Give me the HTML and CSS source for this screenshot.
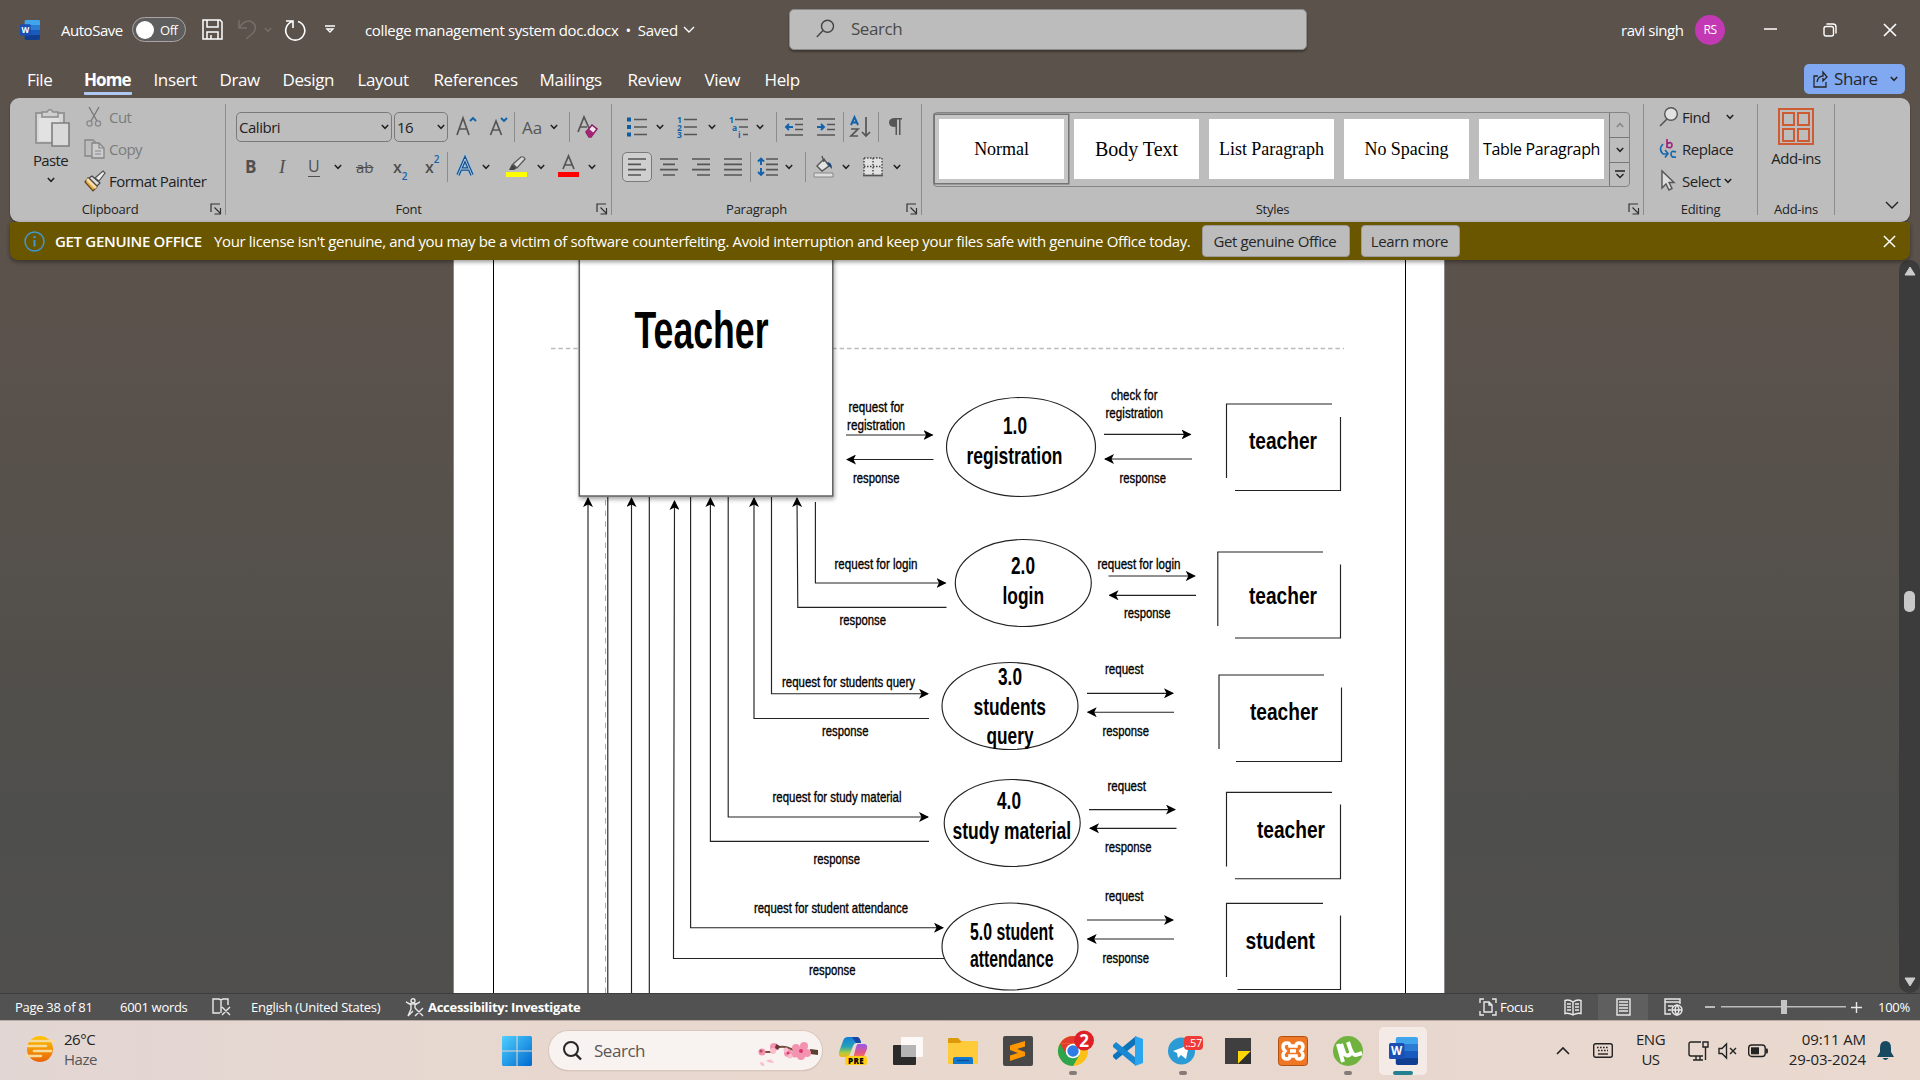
FILE: index.html
```html
<!DOCTYPE html>
<html lang="en">
<head>
<meta charset="utf-8">
<title>college management system doc.docx - Word</title>
<link rel="stylesheet" href="styles.css">
</head>
<body>
<svg class="defs" width="0" height="0">
  <defs>
    <symbol id="chev" viewBox="0 0 8 6"><path d="M.8 1 4 4.3 7.2 1" fill="none" stroke="currentColor" stroke-width="1.5"/></symbol>
    <symbol id="close" viewBox="0 0 14 14"><path d="M1 1l12 12M13 1 1 13" fill="none" stroke="currentColor" stroke-width="1.6"/></symbol>
    <symbol id="launch" viewBox="0 0 12 12"><path d="M1 9V1h9M4.500 4.500l5.500 5.500M10.500 5v6h-6" fill="none" stroke="#333" stroke-width="1.2"/></symbol>
    <symbol id="word" viewBox="0 0 30 28">
      <path d="M9 0h19q2 0 2 2v5H7V2q0-2 2-2z" fill="#41a5ee"/><path d="M7 7h23v7H7z" fill="#2b7cd3"/><path d="M7 14h23v7H7z" fill="#185abd"/><path d="M7 21h23v5q0 2-2 2H9q-2 0-2-2z" fill="#103f91"/>
      <rect y="6" width="16" height="16" rx="1.500" fill="#1b4fb3"/><text x="8" y="18.500" text-anchor="middle" class="wordletter">W</text>
    </symbol>
  </defs>
</svg>

<header class="titlebar">
  <svg class="i20" viewBox="0 0 30 28" preserveAspectRatio="none"><use href="#word"/></svg>
  <span>AutoSave</span>
  <span class="toggle"><i></i>Off</span>
  <svg width="21" height="21" viewBox="0 0 21 21"><path d="M1 1h17l2 2v17H1zM5 1v7h11V1M5 20v-7h11v7M9 20v-4" fill="none" stroke="#fff" stroke-width="1.500"/></svg>
  <svg width="20" height="21" viewBox="0 0 20 21"><path d="M1 1v8h8M1 9C5 3 10 1 14 3c5 3 4 8 1 11l-7 6" fill="none" stroke="#766e69" stroke-width="1.500"/></svg>
  <svg class="dim" width="8" height="6"><use href="#chev"/></svg>
  <svg width="22" height="22" viewBox="0 0 22 22"><path d="M1 2h7v7M7.500 2.500A9.500 9.500 0 1 0 13 2.500" fill="none" stroke="#fff" stroke-width="1.600"/></svg>
  <svg width="10" height="9" viewBox="0 0 10 9"><path d="M0 1h10M2 4l3 3 3-3z" fill="none" stroke="#fff" stroke-width="1.300"/></svg>
  <span class="docname">college management system doc.docx&nbsp; •&nbsp; Saved <svg width="12" height="8" viewBox="0 0 12 8"><path d="M1 1l5 5 5-5" fill="none" stroke="#fff" stroke-width="1.400"/></svg></span>
  <div class="search"><svg width="19" height="19" viewBox="0 0 19 19"><circle cx="11.500" cy="7.300" r="6" fill="none" stroke="#444" stroke-width="1.400"/><path d="M7 11.500.8 18" stroke="#444" stroke-width="1.400"/></svg>Search</div>
  <span>ravi singh</span>
  <span class="avatar">RS</span>
  <svg width="13" height="13" viewBox="0 0 13 13"><path d="M0 6h13" stroke="#fff" stroke-width="1.500"/></svg>
  <svg width="14" height="14" viewBox="0 0 14 14"><rect x="1" y="3.500" width="9.500" height="9.500" rx="2" fill="none" stroke="#fff" stroke-width="1.400"/><path d="M3.500 1H10q3 0 3 3v6.500" fill="none" stroke="#fff" stroke-width="1.400"/></svg>
  <svg width="14" height="14"><use href="#close"/></svg>
</header>

<nav class="tabs">
  <span>File</span><span class="active"><b>Home</b></span><span>Insert</span><span>Draw</span><span>Design</span><span>Layout</span><span>References</span><span>Mailings</span><span>Review</span><span>View</span><span>Help</span>
  <button class="share"><svg width="15" height="17" viewBox="0 0 15 17"><path d="M5 5H1v11h12v-5M4 11c1-5 4-6 6-6V1l4 5-4 4V7" fill="none" stroke="#262626" stroke-width="1.300"/></svg>Share<svg width="8" height="6"><use href="#chev"/></svg></button>
</nav>

<section class="ribbon">
  <div class="group clipboard">
    <div class="clip">
      <div class="paste">
        <svg width="36" height="39" viewBox="0 0 36 39"><path d="M2 5h28v30H2z" fill="#d6d6d6" stroke="#969696" stroke-width="2"/><path d="M8 9V4h5q3-5 6 0h5v5z" fill="#cfcfcf" stroke="#8d8d8d" stroke-width="1.500"/><path d="M5 10h20v23H5z" fill="#e2e2e2"/><path d="M18 15h17v23H18z" fill="#d9d9d9" stroke="#7d7d7d" stroke-width="1.600"/></svg>
        <span>Paste</span><svg width="8" height="6"><use href="#chev"/></svg>
      </div>
      <div class="cliprows">
        <div class="off"><svg width="22" height="22" viewBox="0 0 22 22"><path d="M5 1l8 14M15 1 7 15" stroke="#777" stroke-width="1.300"/><circle cx="5.500" cy="17.500" r="2.600" fill="none" stroke="#888" stroke-width="1.300"/><circle cx="14" cy="17.500" r="2.600" fill="none" stroke="#888" stroke-width="1.300"/></svg>Cut</div>
        <div class="off"><svg width="22" height="22" viewBox="0 0 22 22"><path d="M8 18H1V2h8l3 3" fill="none" stroke="#858585" stroke-width="1.300"/><path d="M8 5h7l5 5v10H8z" fill="#ccc" stroke="#858585" stroke-width="1.300"/><path d="M15 5v5h5M11 13h6M11 16h6" fill="none" stroke="#858585" stroke-width="1.200"/></svg>Copy</div>
        <div><svg width="22" height="22" viewBox="0 0 22 22"><path d="M19 1l2 2-6 8-4-3z" fill="#eee" stroke="#555" stroke-width="1.200"/><path d="M8 6l8 7-3 3-8-8z" fill="#ddd" stroke="#444" stroke-width="1.200"/><path d="M4 8l9 9-4 4-8-9z" fill="#e7a73b" stroke="#5b4320" stroke-width="1.200"/><path d="M4 8l9 9-2 2-9-9z" fill="#f5ddb0"/></svg>Format Painter</div>
      </div>
    </div>
    <div class="label">Clipboard<svg width="12" height="12"><use href="#launch"/></svg></div>
  </div>

  <div class="group font">
    <div class="r1">
      <span class="box fam">Calibri<svg width="8" height="6"><use href="#chev"/></svg></span>
      <span class="box size">16<svg width="8" height="6"><use href="#chev"/></svg></span>
      <svg width="20" height="22" viewBox="0 0 20 22"><path d="M1 19 7 2l6 17M3 13h8" class="g"/><path d="M14 5l3-3 3 3" class="bl"/></svg>
      <svg width="20" height="22" viewBox="0 0 20 22"><path d="M1.500 19 7 5l5.500 14M3.500 14h7" class="g"/><path d="M12 2l3 3 3-3" class="bl"/></svg>
      <i class="sep"></i>
      <span class="aa">Aa</span><svg width="8" height="6"><use href="#chev"/></svg>
      <i class="sep"></i>
      <svg width="22" height="24" viewBox="0 0 22 24"><path d="M1 17 7 2l5 11M3 12h7" class="g"/><path d="M9 17l6-7 5 4-6 8H12z" fill="#f2e3ec" stroke="#8b1a62" stroke-width="1.500"/><path d="M9 17l3-3 5 4-3 4h-2z" fill="#a52473"/></svg>
    </div>
    <div class="r2">
      <b class="fb">B</b><em class="fi">I</em><span class="fu">U</span><svg width="8" height="6"><use href="#chev"/></svg>
      <s class="fs">ab</s><span class="fx">x<sub>2</sub></span><span class="fx">x<sup>2</sup></span><i class="sep"></i>
      <svg width="18" height="20" viewBox="0 0 18 20"><path d="M2 18 9 2l7 16M5 12h8" fill="none" stroke="#9fc4e6" stroke-width="5"/><path d="M2 18 9 2l7 16M5 12h8" fill="none" stroke="#17518c" stroke-width="3.400"/><path d="M2 18 9 2l7 16M5 12h8" fill="none" stroke="#dcebf7" stroke-width=".8"/></svg><svg width="8" height="6"><use href="#chev"/></svg>
      <svg width="21" height="22" viewBox="0 0 21 22"><path d="M0 16h21v5H0z" fill="#ff0"/><path d="M3 14l3-6 5 4-3 2z" fill="#444"/><path d="M7 8l8-7q3-1 4 2l-8 9z" fill="#d8d8d8" stroke="#555" stroke-width="1.200"/></svg><svg width="8" height="6"><use href="#chev"/></svg>
      <svg width="21" height="22" viewBox="0 0 21 22"><path d="M0 16h21v5H0z" fill="red"/><path d="M5 13 10.500 0 16 13M7 9h7" class="g"/></svg><svg width="8" height="6"><use href="#chev"/></svg>
    </div>
    <div class="label">Font<svg width="12" height="12"><use href="#launch"/></svg></div>
  </div>

  <div class="group para">
    <div class="r1">
      <svg width="20" height="20" viewBox="0 0 20 20"><path d="M0 .5h4v4H0zM0 8h4v4H0zM0 15.500h4v4H0z" fill="#0d5da6"/><path d="M7 2.500h13M7 10h13M7 17.500h13" class="g"/></svg><svg width="8" height="6"><use href="#chev"/></svg>
      <svg width="20" height="22" viewBox="0 0 20 22"><g class="num"><text x="0" y="7">1</text><text x="0" y="14.500">2</text><text x="0" y="22">3</text></g><path d="M7 3.500h13M7 11h13M7 18.500h13" class="g"/></svg><svg width="8" height="6"><use href="#chev"/></svg>
      <svg width="20" height="22" viewBox="0 0 20 22"><g class="num"><text x="0" y="7">1</text><text x="3" y="14.500">a</text><text x="9" y="22">i</text></g><path d="M6 3.500h13M10 11h9M14 18.500h5" class="g"/></svg><svg width="8" height="6"><use href="#chev"/></svg>
      <i class="sep"></i>
      <svg width="18" height="18" viewBox="0 0 18 18"><path d="M0 1h18M10 6.500h8M10 11.500h8M0 17h18" class="g"/><path d="M8 9H1M4 6 1 9l3 3" class="bl"/></svg>
      <svg width="18" height="18" viewBox="0 0 18 18"><path d="M0 1h18M10 6.500h8M10 11.500h8M0 17h18" class="g"/><path d="M0 9h7M4 6l3 3-3 3" class="bl"/></svg>
      <i class="sep"></i>
      <svg width="21" height="22" viewBox="0 0 21 22"><path d="M1 9 4.500 1 8 9M2 6.500h5" class="bl"/><path d="M1 13h7l-7 7h7M16 1v19M12 16l4 4 4-4" class="g"/></svg>
      <i class="sep"></i>
      <svg width="13" height="18" viewBox="0 0 13 18"><path d="M13 0v1.500h-1.500V17H10V1.500H8V17H6.500V9Q0 9 0 4.500T6 0z" fill="#555"/></svg>
    </div>
    <div class="r2">
      <span class="sel"><svg width="19" height="18" viewBox="0 0 19 18"><path d="M0 1h18M0 6.300h13M0 11.600h18M0 17h13" class="g"/></svg></span>
      <svg width="19" height="18" viewBox="0 0 19 18"><path d="M0 1h18M3 6.300h12M0 11.600h18M3 17h12" class="g"/></svg>
      <svg width="19" height="18" viewBox="0 0 19 18"><path d="M0 1h18M5 6.300h13M0 11.600h18M5 17h13" class="g"/></svg>
      <svg width="19" height="18" viewBox="0 0 19 18"><path d="M0 1h18M0 6.300h18M0 11.600h18M0 17h18" class="g"/></svg>
      <i class="sep"></i>
      <svg width="21" height="20" viewBox="0 0 21 20"><path d="M9 2h12M9 7.300h12M9 12.600h12M9 18h12" class="g"/><path d="M4 2v6M1 4.500 4 1.500l3 3M4 11v7M1 15l3 3 3-3" class="bl"/></svg><svg width="8" height="6"><use href="#chev"/></svg>
      <i class="sep"></i>
      <svg width="21" height="22" viewBox="0 0 21 22"><path d="M1 17h19v4H1z" fill="#ddd" stroke="#888"/><path d="M4 10l7-7 5 7-7 5zM9 0l2 6" fill="#e4e4e4" stroke="#555" stroke-width="1.400"/><path d="M14 6q5 0 5 7l-3-3z" fill="#1c4a78"/></svg><svg width="8" height="6"><use href="#chev"/></svg>
      <svg width="20" height="20" viewBox="0 0 20 20"><path d="M1 1h18v17H1z" fill="#e2e2e2"/><path d="M1 1h18M1 1v17M19 1v17M10 1v17M1 9.500h18" fill="none" stroke="#444" stroke-width="1.400" stroke-dasharray="1.500 1.500"/><path d="M0 18.500h20" class="g"/></svg><svg width="8" height="6"><use href="#chev"/></svg>
    </div>
    <div class="label">Paragraph<svg width="12" height="12"><use href="#launch"/></svg></div>
  </div>

  <div class="group styles">
    <div class="gallery">
      <div class="style on"><span class="n18">Normal</span></div>
      <div class="style"><span class="n20">Body Text</span></div>
      <div class="style"><span class="n18">List Paragraph</span></div>
      <div class="style"><span class="n18">No Spacing</span></div>
      <div class="style"><span class="ui">Table Paragraph</span></div>
      <div class="spin"><span class="fade"><svg class="flip" width="8" height="6"><use href="#chev"/></svg></span><span><svg width="8" height="6"><use href="#chev"/></svg></span><span><svg width="10" height="9" viewBox="0 0 10 9"><path d="M0 1h10M1.500 4 5 7.500 8.500 4" fill="none" stroke="#222" stroke-width="1.400"/></svg></span></div>
    </div>
    <div class="label">Styles<svg width="12" height="12"><use href="#launch"/></svg></div>
  </div>

  <div class="group editing">
    <div class="edrows">
      <div class="find"><svg width="20" height="20" viewBox="0 0 20 20"><circle cx="12" cy="7" r="6.300" fill="#e2e2e2" stroke="#555" stroke-width="1.400"/><path d="M8 12l-7 7" stroke="#555" stroke-width="1.600"/></svg><span>Find</span><svg width="8" height="6"><use href="#chev"/></svg></div>
      <div><svg width="20" height="22" viewBox="0 0 20 22"><path d="M8 1v9M8 6q5-3 5 1t-5 2" fill="none" stroke="#a0227a" stroke-width="1.700"/><path d="M17 14q-5-2-5 2t5 3M4 6q-5 5 0 10h4M6 12l3 3.500-3 4" fill="none" stroke="#1768ad" stroke-width="1.700"/></svg><span>Replace</span></div>
      <div><svg width="20" height="22" viewBox="0 0 20 22"><path d="M3 1v17l4-4 3 6 3-1.500-3-6h5z" fill="#ddd" stroke="#555" stroke-width="1.400"/></svg><span>Select</span><svg width="8" height="6"><use href="#chev"/></svg></div>
    </div>
    <div class="label plain">Editing</div>
  </div>

  <div class="group addins">
    <div class="addbtn"><svg width="36" height="37" viewBox="0 0 36 37"><path d="M1 1h34v35H1zM5 5h11v12H5zM20 5h11v12H20zM5 21h11v12H5zM20 21h11v12H20z" fill="none" stroke="#cf5b33" stroke-width="2"/></svg>Add-ins</div>
    <div class="label plain">Add-ins</div>
  </div>
  <div class="fold"><svg width="14" height="9" viewBox="0 0 14 9"><path d="M1 1l6 6 6-6" fill="none" stroke="#222" stroke-width="1.400"/></svg></div>
</section>

<section class="warn">
  <svg width="21" height="21" viewBox="0 0 21 21"><circle cx="10.500" cy="10.500" r="9.500" fill="none" stroke="#3f98cf" stroke-width="1.500"/><path d="M10.500 9v6.500M10.500 5v2.300" stroke="#3f98cf" stroke-width="2"/></svg>
  <b>GET GENUINE OFFICE</b>
  <span>Your license isn't genuine, and you may be a victim of software counterfeiting. Avoid interruption and keep your files safe with genuine Office today.</span>
  <button>Get genuine Office</button>
  <button>Learn more</button>
  <svg width="13" height="13"><use href="#close"/></svg>
</section>

<main class="doc">
  <svg class="page" viewBox="454 260 990 733">
    <defs>
      <marker id="ah" viewBox="0 0 10 10" refX="9" refY="5" markerWidth="10" markerHeight="10" markerUnits="userSpaceOnUse" orient="auto-start-reverse"><path d="M0 0 10 5 0 10 2.500 5z" fill="#000"/></marker>
      <filter id="sh" x="-5%" y="-5%" width="110%" height="115%"><feDropShadow dx="1" dy="2.500" stdDeviation="2" flood-opacity=".35"/></filter>
    </defs>
    <path d="M493.500 260v733M1405.500 260v733" stroke="#000"/>
    <path d="M551 348.500H1344" stroke="#bbb" stroke-width="1.500" stroke-dasharray="4.500 2.900"/>
    <path d="M605.500 500V993" stroke="#aaa" stroke-dasharray="5.600 5"/>
    <g class="ln">
      <path d="M588 993V498" marker-end="url(#ah)"/>
      <path d="M631.500 993V498" marker-end="url(#ah)"/>
      <path d="M607.800 497V993M649.300 497V993"/>
      <path d="M945 958.500H673.500L674.500 501" marker-end="url(#ah)"/>
      <path d="M690.600 497V927.700H943" marker-end="url(#ah)"/>
      <path d="M929 841.300H710.400V498" marker-end="url(#ah)"/>
      <path d="M728.200 497V817H928" marker-end="url(#ah)"/>
      <path d="M929 718.500H754V498" marker-end="url(#ah)"/>
      <path d="M771.500 497V693.700H928" marker-end="url(#ah)"/>
      <path d="M946.500 607.300H797.800L797 498" marker-end="url(#ah)"/>
      <path d="M815.400 502V583H945.500" marker-end="url(#ah)"/>
      <path d="M846 435H932.500" marker-end="url(#ah)"/><path d="M933.500 459.500H847" marker-end="url(#ah)"/>
      <path d="M1104 434.400H1190.500" marker-end="url(#ah)"/><path d="M1192 459H1105" marker-end="url(#ah)"/>
      <path d="M1108.500 576H1194.800" marker-end="url(#ah)"/><path d="M1196 595.300H1109.500" marker-end="url(#ah)"/>
      <path d="M1087 693.300H1173" marker-end="url(#ah)"/><path d="M1174 712.200H1087.700" marker-end="url(#ah)"/>
      <path d="M1089 809.600H1175" marker-end="url(#ah)"/><path d="M1176.500 828.300H1090" marker-end="url(#ah)"/>
      <path d="M1087 920H1173" marker-end="url(#ah)"/><path d="M1174 939H1087.700" marker-end="url(#ah)"/>
      <ellipse cx="1021" cy="447" rx="74.500" ry="49.500"/>
      <ellipse cx="1023.300" cy="583" rx="68" ry="43.500"/>
      <ellipse cx="1010" cy="706" rx="68" ry="43.500"/>
      <ellipse cx="1012.200" cy="823" rx="68" ry="43.500"/>
      <ellipse cx="1010" cy="946.500" rx="68" ry="43.500"/>
      <path d="M1226.500 478V404H1332M1235 490.500H1340.500V417"/>
      <path d="M1217.800 626V552H1323M1235 638H1340.500V564.500"/>
      <path d="M1219 749V675H1324M1236 761.500H1341.500V687.500"/>
      <path d="M1226.500 866.500V792.300H1332M1235 878.700H1340.500V804.500"/>
      <path d="M1226.500 977V903.300H1323M1237.500 989.500H1340.500V915.500"/>
    </g>
    <rect x="579.300" y="250" width="253.500" height="246" fill="#fff" stroke="#606060" stroke-width="1.500" filter="url(#sh)"/>
    <g class="bt">
      <text x="634.500" y="347.500" textLength="134" lengthAdjust="spacingAndGlyphs" font-size="51">Teacher</text>
      <text x="1003" y="434" textLength="24" lengthAdjust="spacingAndGlyphs">1.0</text>
      <text x="966.500" y="463.600" textLength="96" lengthAdjust="spacingAndGlyphs">registration</text>
      <text x="1011" y="573.600" textLength="24" lengthAdjust="spacingAndGlyphs">2.0</text>
      <text x="1002.500" y="603.600" textLength="41.500" lengthAdjust="spacingAndGlyphs">login</text>
      <text x="998" y="685" textLength="24" lengthAdjust="spacingAndGlyphs">3.0</text>
      <text x="973.500" y="714.700" textLength="72.500" lengthAdjust="spacingAndGlyphs">students</text>
      <text x="986.500" y="744.300" textLength="47" lengthAdjust="spacingAndGlyphs">query</text>
      <text x="997" y="809" textLength="24" lengthAdjust="spacingAndGlyphs">4.0</text>
      <text x="952.500" y="838.600" textLength="118.500" lengthAdjust="spacingAndGlyphs">study material</text>
      <text x="970" y="939.900" textLength="83.500" lengthAdjust="spacingAndGlyphs" font-size="23">5.0 student</text>
      <text x="970" y="967" textLength="83.500" lengthAdjust="spacingAndGlyphs" font-size="23">attendance</text>
      <text x="1249" y="449.300" textLength="68" lengthAdjust="spacingAndGlyphs">teacher</text>
      <text x="1249" y="604.300" textLength="68" lengthAdjust="spacingAndGlyphs">teacher</text>
      <text x="1250" y="720" textLength="68" lengthAdjust="spacingAndGlyphs">teacher</text>
      <text x="1257" y="838.200" textLength="68" lengthAdjust="spacingAndGlyphs">teacher</text>
      <text x="1245.500" y="949.300" textLength="69.500" lengthAdjust="spacingAndGlyphs">student</text>
    </g>
    <g class="st">
      <text x="848.500" y="411.700" textLength="55.500" lengthAdjust="spacingAndGlyphs">request for</text>
      <text x="847" y="430" textLength="58" lengthAdjust="spacingAndGlyphs">registration</text>
      <text x="853" y="482.500" textLength="46.500" lengthAdjust="spacingAndGlyphs">response</text>
      <text x="1111" y="399.500" textLength="46.500" lengthAdjust="spacingAndGlyphs">check for</text>
      <text x="1105.500" y="418" textLength="57.500" lengthAdjust="spacingAndGlyphs">registration</text>
      <text x="1119.500" y="482.500" textLength="46.500" lengthAdjust="spacingAndGlyphs">response</text>
      <text x="834.500" y="568.500" textLength="83" lengthAdjust="spacingAndGlyphs">request for login</text>
      <text x="839.500" y="624.500" textLength="46.500" lengthAdjust="spacingAndGlyphs">response</text>
      <text x="1097.500" y="568.500" textLength="83" lengthAdjust="spacingAndGlyphs">request for login</text>
      <text x="1124" y="617.500" textLength="46.500" lengthAdjust="spacingAndGlyphs">response</text>
      <text x="782" y="686.700" textLength="133" lengthAdjust="spacingAndGlyphs">request for students query</text>
      <text x="822" y="736.300" textLength="46.500" lengthAdjust="spacingAndGlyphs">response</text>
      <text x="1105" y="674.300" textLength="38.500" lengthAdjust="spacingAndGlyphs">request</text>
      <text x="1102.500" y="736.300" textLength="46.500" lengthAdjust="spacingAndGlyphs">response</text>
      <text x="772.500" y="802.300" textLength="129" lengthAdjust="spacingAndGlyphs">request for study material</text>
      <text x="813.500" y="864.300" textLength="46.500" lengthAdjust="spacingAndGlyphs">response</text>
      <text x="1107.500" y="791.300" textLength="38.500" lengthAdjust="spacingAndGlyphs">request</text>
      <text x="1105" y="851.500" textLength="46.500" lengthAdjust="spacingAndGlyphs">response</text>
      <text x="754" y="913.300" textLength="154" lengthAdjust="spacingAndGlyphs">request for student attendance</text>
      <text x="809" y="975.300" textLength="46.500" lengthAdjust="spacingAndGlyphs">response</text>
      <text x="1105" y="901" textLength="38.500" lengthAdjust="spacingAndGlyphs">request</text>
      <text x="1102.500" y="962.700" textLength="46.500" lengthAdjust="spacingAndGlyphs">response</text>
    </g>
  </svg>
  <div class="scroll">
    <svg width="12" height="10" viewBox="0 0 12 10"><path d="M6 1l5 8H1z" fill="#ccc" stroke="#ccc" stroke-linejoin="round"/></svg>
    <i></i>
    <svg width="12" height="10" viewBox="0 0 12 10"><path d="M6 9 1 1h10z" fill="#ccc" stroke="#ccc" stroke-linejoin="round"/></svg>
  </div>
</main>

<footer class="status">
  <span>Page 38 of 81</span><span>6001 words</span>
  <svg width="19" height="18" viewBox="0 0 19 18"><path d="M9 2v13M8 15H1V1h6l2 1 2-1h5v6M10 9l8 8M18 9l-8 8" class="w"/></svg>
  <span>English (United States)</span>
  <svg width="19" height="19" viewBox="0 0 19 19"><circle cx="8" cy="2.800" r="2" class="w"/><path d="M1 4l5 3v4l-3 7 5-5M15 4l-5 3v3M1 4q7 4 14 0M10 10l8 8M18 10l-8 8" class="w"/></svg>
  <b>Accessibility: Investigate</b>
  <svg width="18" height="18" viewBox="0 0 18 18"><path d="M1 5V1h4M13 1h4v4M17 13v4h-4M5 17H1v-4M5 4h5l3 3v7H5zM10 4v3h3" class="w"/></svg>
  <span>Focus</span>
  <svg width="18" height="17" viewBox="0 0 18 17"><path d="M9 3Q5 0 1 1.500v13q4-1 8 1.500 4-2.500 8-1.500v-13Q13 0 9 3zv13M3 5h4M3 8h4M3 11h4M11 5h4M11 8h4M11 11h4" class="w"/></svg>
  <span class="view"><svg width="15" height="18" viewBox="0 0 15 18"><path d="M1 1h13v16H1zM3 4h9M3 7h9M3 10h9M3 13h9" class="w"/></svg></span>
  <svg width="19" height="18" viewBox="0 0 19 18"><path d="M7 16H1V1h15v5M1 4h15M4 8h5M4 12h3" class="w"/><circle cx="13" cy="12" r="5" class="w"/><path d="M8 12h10M13 7q-4 5 0 10 4-5 0-10" class="w"/></svg>
  <svg width="10" height="2"><path d="M0 1h10" class="w"/></svg>
  <span class="slider"><i></i></span>
  <svg width="11" height="11"><path d="M0 5.500h11M5.500 0v11" class="w"/></svg>
  <span>100%</span>
</footer>

<footer class="taskbar">
  <div class="weather">
    <svg width="30" height="28" viewBox="0 0 30 28"><defs><linearGradient id="sun" x2="0" y2="1"><stop stop-color="#ffc400"/><stop offset="1" stop-color="#e8640c"/></linearGradient></defs><circle cx="15" cy="14" r="13" fill="url(#sun)"/><path d="M5 6h24M3 11h18M9 16h17M1 21h15" stroke="#f5dc9c" stroke-width="2.600" stroke-linecap="round"/></svg>
    <span>26°C<br><i>Haze</i></span>
  </div>
  <svg width="30" height="30" viewBox="0 0 30 30"><defs><linearGradient id="win" x2="1" y2="1"><stop stop-color="#4fd0ff"/><stop offset="1" stop-color="#0069cf"/></linearGradient></defs><path d="M1 0h13.500v14.500H0V1zM15.500 0H29l1 1v13.500H15.500zM0 15.500h14.500V30H1l-1-1zM15.500 15.500H30V29l-1 1H15.500z" fill="url(#win)"/></svg>
  <div class="tsearch">
    <svg width="19" height="20" viewBox="0 0 19 20"><circle cx="8" cy="8" r="7" fill="none" stroke="#262626" stroke-width="2"/><path d="M13 13.500l5 5" stroke="#262626" stroke-width="2.400"/></svg>
    <span>Search</span>
    <svg width="62" height="26" viewBox="0 0 62 26"><path d="M61 11H52Q42 12 34 8T20 7l-6 4H4" fill="none" stroke="#71503f" stroke-width="2"/><path d="M53 8l8 1v5l-8-1z" fill="#59402f"/><g fill="#f493b0"><circle cx="5" cy="11" r="3.500"/><circle cx="17" cy="6" r="4"/><circle cx="31" cy="12" r="4"/><circle cx="39" cy="7" r="4"/><circle cx="47" cy="5" r="4"/><circle cx="50" cy="12" r="4"/><circle cx="44" cy="15" r="4"/><circle cx="38" cy="13" r="3.500"/><circle cx="44" cy="10" r="4"/></g><g fill="#f8bccd"><circle cx="16" cy="10" r="3"/><circle cx="29" cy="9" r="2.500"/><circle cx="33" cy="15" r="2.500"/><path d="M9 20q5-4 8 2-5 0-8-2zM3 21q5 0 4 4-4 0-4-4z"/></g><circle cx="44" cy="10" r="2" fill="#d43870"/><circle cx="31" cy="12" r="1.500" fill="#d43870"/><circle cx="4" cy="10" r="1.600" fill="#b34b66"/><path d="M19 3l4 2-2 4-3-2z" fill="#6b3439"/></svg>
  </div>
  <div class="apps">
    <span><svg width="30" height="30" viewBox="0 0 30 30"><defs><linearGradient id="c1" x2="0" y2="1"><stop stop-color="#137ddc"/><stop offset=".5" stop-color="#27a3b4"/><stop offset=".8" stop-color="#b4cf37"/><stop offset="1" stop-color="#f5b021"/></linearGradient><linearGradient id="c2" x2="0" y2="1"><stop stop-color="#9457ef"/><stop offset=".6" stop-color="#e8577f"/><stop offset="1" stop-color="#f78b46"/></linearGradient></defs><path d="M10 1h9q3 0 4 6h-5q-2 0-3 3l-3 8q-1 3-4 3H4q-4 0-3-5L5 5q1-4 5-4z" fill="url(#c1)"/><path d="M14 1h5q3 0 4 6h-5z" fill="#1a45a8"/><path d="M20 8h6q4 0 3 5l-3 7q-1 3-5 3h-9q3 0 4-4l2-8q1-3 2-3z" fill="url(#c2)"/><rect x="7" y="20" width="22" height="9" rx="2.500" fill="#ffcf16"/><text x="18" y="27.500" text-anchor="middle" class="pre">PRE</text></svg></span>
    <span><svg width="30" height="30" viewBox="0 0 30 30"><rect y="9" width="23" height="20" rx="1" fill="#2b2b2b"/><rect x="8" y="1" width="22" height="20" rx="1" fill="#fff" opacity=".85"/><path d="M8 9h15v12H8z" fill="#b4b4b4"/></svg></span>
    <span><svg width="30" height="28" viewBox="0 0 30 28"><path d="M0 2q0-1 1-1h9l3 3h16v6H0z" fill="#dd9a08"/><path d="M0 6h12l2-2h16v22q0 1-1 1H1q-1 0-1-1z" fill="#ffcb3a"/><path d="M5 27v-5q0-2 2-2h16q2 0 2 2v5z" fill="#1277cf"/><path d="M9 23.500h12" stroke="#0b4f96" stroke-width="1.400"/></svg></span>
    <span><svg width="30" height="30" viewBox="0 0 30 30"><rect width="30" height="30" rx="2" fill="#484848"/><path d="M7 9.500 22 5v5.500l-8 2.500 8 3v4L7 25v-5.500l8-2.500-8-3z" fill="#ff9800"/></svg></span>
    <span><svg width="38" height="38" viewBox="0 0 38 38"><circle cx="19" cy="19" r="15" fill="#fbc116"/><path d="M6 11.500A15 15 0 0 1 32 11.500H19z" fill="#e23a2e"/><path d="M6 11.500A15 15 0 0 0 19 34l6.500-11.300L19 19z" fill="#2da44e"/><path d="M6 11.500 12.500 22.700 19 11.500z" fill="#e23a2e"/><circle cx="19" cy="19" r="7.300" fill="#fff"/><circle cx="19" cy="19" r="5.700" fill="#2f7ce6"/><circle cx="30" cy="8.500" r="10" fill="#df2029"/><text x="30" y="14.500" text-anchor="middle" class="bdg">2</text></svg><i></i></span>
    <span><svg width="30" height="30" viewBox="0 0 30 30"><path d="M23 0v8L3 24l-3-3V19z" fill="#0d74bc"/><path d="M0 11V9l3-3 20 16v8z" fill="#1988d2"/><path d="M22 0l8 3v24l-8 3z" fill="#2aa6f0"/></svg></span>
    <span><svg width="38" height="30" viewBox="0 0 38 30"><circle cx="17.500" cy="15" r="13.500" fill="#2a9bd4"/><path d="M9 15 25 9l-3 14-5-4-3 3-1-5z" fill="#fff"/><rect x="20" y="0" width="19" height="14" rx="4" fill="#ee3b36"/><text x="29.500" y="11" text-anchor="middle" class="bdg2">..57</text></svg><i></i></span>
    <span><svg width="26" height="26" viewBox="0 0 26 26"><path d="M0 0h26v26H0z" fill="#3f3f3f"/><path d="M13 26V13h13z" fill="#ffd60a"/><path d="M13 26 26 13v13z" fill="#2f2f2f"/></svg></span>
    <span><svg width="30" height="30" viewBox="0 0 30 30"><rect x=".5" y=".5" width="29" height="29" rx="3" fill="#ef7623" stroke="#b05114"/><path d="M9 7q-4 0-4 4 0 2 2 4-2 2-2 4 0 4 4 4 3 0 3-3h6q0 3 3 3 4 0 4-4 0-2-2-4 2-2 2-4 0-4-4-4-3 0-3 3h-6q0-3-3-3zM12 15h6" fill="none" stroke="#fff" stroke-width="3.500"/></svg></span>
    <span><svg width="30" height="30" viewBox="0 0 30 30"><circle cx="15" cy="15" r="15" fill="#6fb33e"/><path d="M10 26 5 8M8 8l3 9q2 4 6 1.500Q19 17 17 12l-2-6M18 14q2 7 8 4l3-1" fill="none" stroke="#fff" stroke-width="4"/></svg><i></i></span>
    <span class="cur"><svg width="29" height="28" viewBox="0 0 30 28" preserveAspectRatio="none"><use href="#word"/></svg><i></i></span>
  </div>
  <div class="tray">
    <svg width="14" height="8" viewBox="0 0 14 8"><path d="M1 7l6-6 6 6" fill="none" stroke="#222" stroke-width="1.600"/></svg>
    <svg width="20" height="15" viewBox="0 0 20 15"><rect x=".7" y=".7" width="18.600" height="13.600" rx="2" class="k"/><path d="M4 4.500h12M5 7.500h10" class="k" stroke-dasharray="1.600 1.400"/><path d="M5 11h10" class="k"/></svg>
    <span class="lang">ENG<br>US</span>
    <svg width="21" height="22" viewBox="0 0 21 22"><path d="M13 2H3Q1 2 1 4v10q0 2 2 2h12M5 20h10M8 16v4M12 16v4M15 2h5v5h-5zM17.500 7v13" class="k"/></svg>
    <svg width="20" height="16" viewBox="0 0 20 16"><path d="M1 5.500h3L8.500 1v14L4 10.500H1zM12 5l6 6M18 5l-6 6" class="k"/></svg>
    <svg width="21" height="14" viewBox="0 0 21 14"><rect x=".7" y="1" width="16.500" height="11.500" rx="3" class="k"/><rect x="3" y="3.300" width="8" height="7" fill="#222"/><path d="M18 4.500h1.500q1 2.500 0 5H18z" fill="#222"/></svg>
    <span class="clock">09:11 AM<br>29-03-2024</span>
    <svg width="17" height="20" viewBox="0 0 17 20"><path d="M8.500 0Q14 0 14 7v4l3 5H0l3-5V7Q3 0 8.500 0zM5.500 17h6q-3 4-6 0z" fill="#174a60"/></svg>
  </div>
</footer>
</body>
</html>
```
FILE: styles.css
```css
* { box-sizing: border-box; }
body {
  margin: 0; width: 1920px; height: 1080px; overflow: hidden;
  display: grid; grid-template-rows: 60px 38px 124px 38px 733px 27px 60px;
  font-family: "Open Sans", "Noto Sans", sans-serif; font-size: 15px; letter-spacing: -0.47px;
  white-space: nowrap; color: #222;
  background: linear-gradient(#5b524b 0, #5b524c 30%, #54504b 55%, #4e4e4c 75%, #504f4c 100%);
}
.defs { position: absolute; }
svg { display: block; flex: none; overflow: visible; }
button { font: inherit; letter-spacing: inherit; color: inherit; border: 0; padding: 0; }
.g { fill: none; stroke: #555; stroke-width: 1.7; }
.bl { fill: none; stroke: #0f62ab; stroke-width: 1.9; }
.w { fill: none; stroke: #e8e8e8; stroke-width: 1.4; }
.k { fill: none; stroke: #222; stroke-width: 1.4; }
.wordletter { font: bold 12px "Open Sans", sans-serif; fill: #fff; letter-spacing: 0; }

.titlebar {
  display: grid; align-items: center; color: #fff; padding: 0 0 1px 20px;
  grid-template-columns: 41px 71px 70px 36px 26px 21px 40px 40px 424px 832px 74px 69px 59px 60px 1fr;
}
.i20 { width: 20px; height: 20px; }
.dim { color: #766e69; }
.toggle { width: 54px; height: 25px; border: 1.5px solid #aaa5a2; border-radius: 13px; background: #5e5e5e; display: flex; align-items: center; gap: 6px; padding-left: 3px; font-size: 13px; }
.toggle i { width: 18px; height: 18px; border-radius: 50%; background: #fff; }
.docname { display: flex; align-items: center; gap: 5px; letter-spacing: -0.36px; }
.search { width: 518px; height: 41px; background: #bcbcbc; border: 1.5px solid #8c8a88; border-radius: 5px; box-shadow: 0 2px 2px #0005; display: flex; align-items: center; gap: 16px; padding: 0 0 2px 26px; color: #4a4a4a; font-size: 17px; letter-spacing: -0.45px; }
.avatar { width: 30px; height: 30px; border-radius: 50%; background: #c239b3; display: grid; place-items: center; font-size: 12px; }

.tabs {
  display: grid; padding: 1px 0 0 27px; color: #fff; font-size: 17px; line-height: 38px; letter-spacing: -0.38px; align-items: start;
  grid-template-columns: 57px 69.5px 66px 63px 75px 76px 106px 88px 77px 60px 1039.5px 101px;
}
.tabs > span { height: 37px; }
.active b { display: block; width: 48px; height: 34px; border-bottom: 3px solid #b1c7f3; border-radius: 1px; font-weight: 700; letter-spacing: -0.9px; }
.share { height: 30px; margin-top: 3px; background: #80a9f2; color: #262626; border-radius: 5px; display: flex; align-items: center; gap: 6px; padding-left: 9px; }
.share svg:last-child { margin-left: 6px; }

.ribbon { margin: 0 10px; background: #bdbdbd; border-radius: 9px; padding: 6px 0 7px; display: grid; grid-template-columns: 216px 386px 310px 722px 114px 77px 1fr; box-shadow: 0 1px 2px #0006; z-index: 1; }
.group { border-right: 1.5px solid #8c8c8c; display: flex; flex-direction: column; }
.label { margin-top: auto; height: 13px; font-size: 13px; line-height: 14px; letter-spacing: -0.25px; display: grid; grid-template-columns: 1fr 15px; text-align: center; }
.font .label, .para .label, .styles .label { text-indent: -5px; }
.label.plain { grid-template-columns: 1fr; }
.label svg { margin-top: 1px; }
.clip { display: flex; padding: 5px 0 0 22px; height: 88px; }
.paste { width: 37px; display: flex; flex-direction: column; align-items: center; margin-right: 15px; letter-spacing: -0.65px; }
.paste svg:first-child { margin: -1px 0 1px 2px; }
.paste span { margin: 3px 0 8px; line-height: 18px; }
.cliprows { display: grid; grid-template-rows: 32px 32px 32px; margin-top: -8px; letter-spacing: -0.52px; }
.cliprows div { display: flex; align-items: center; gap: 3px; }
.off { color: #7b7b7b; }
.sep { width: 1px; height: 30px; background: #8c8c8c; }
.r1, .r2 { display: grid; align-items: center; justify-items: start; height: 30px; }
.r1 { margin-top: 8px; }
.r2 { margin-top: 10px; }
.font .r1 { padding-left: 10px; grid-template-columns: 158px 62px 33px 25px 8px 28px 19px 8px 1fr; }
.font .r2 { padding-left: 20px; grid-template-columns: 33px 29px 26px 22px 37px 32px 22px 9px 26px 24px 31px 21px 30px 1fr; }
.para .r1 { padding-left: 15px; grid-template-columns: 29px 21px 31px 21px 27px 20px 9px 32px 26px 7px 28px 11px 1fr; }
.para .r2 { padding-left: 10px; grid-template-columns: 38px 32px 32px 26px 7px 28px 20px 8px 29px 21px 30px 1fr; }
.box { height: 30px; border: 1.5px solid #7a7a7a; border-radius: 5px; display: flex; align-items: center; justify-content: space-between; padding: 0 2px; }
.fam { width: 156px; }
.size { width: 54px; }
.aa { font-size: 17px; color: #555; letter-spacing: 0; }
.fb, .fi, .fu, .fs, .fx { color: #505050; font-size: 17px; line-height: 22px; letter-spacing: 0; }
.fb { margin-left: -1px; }
.fi { font-family: "Liberation Serif", serif; font-size: 19px; }
.fu { line-height: 19px; border-bottom: 1.5px solid #505050; font-size: 16px; }
.fs { font-size: 15px; }
.fx { font-weight: 600; font-size: 16px; display: flex; }
.fx sub, .fx sup { font-size: 10px; color: #0f62ab; line-height: 10px; align-self: end; margin-bottom: -3px; }
.fx sup { align-self: start; margin-top: -2px; }
.num { font: bold 8.5px "Open Sans", sans-serif; fill: #0f62ab; letter-spacing: 0; }
.sel { width: 30px; height: 30px; border: 1.5px solid #7a7a7a; border-radius: 5px; background: #cfcfcf; display: grid; place-items: center; }
.gallery { margin: 8px 0 0 11px; width: 697px; height: 75px; border: 1.5px solid #858585; border-radius: 4px; display: grid; grid-template-columns: repeat(5, 135px) 1fr; }
.style { margin: 5.5px 5px 7px; padding-top: 1px; display: grid; place-items: center; background: #fff; color: #000; }
.on { box-shadow: 0 0 0 4px #c6c6c6, 0 0 0 5.5px #757575; }
.n18 { font: 18px "Liberation Serif", serif; letter-spacing: -0.05px; }
.n20 { font: 20px "Liberation Serif", serif; letter-spacing: 0; }
.ui { font-size: 16px; letter-spacing: -0.35px; }
.spin { display: grid; grid-template-rows: repeat(3, 1fr); border-left: 1.5px solid #777; }
.spin span { display: grid; place-items: center; }
.spin span + span { border-top: 1.5px solid #777; }
.flip { transform: scaleY(-1); }
.fade { color: #888; }
.edrows { display: grid; grid-template-rows: 32px 32px 32px; margin: -3px 0 -9px 15px; }
.edrows div { display: flex; align-items: center; gap: 3px; }
.find svg:last-child { margin-left: 13px; }
.addbtn { display: flex; flex-direction: column; align-items: center; padding: 4px 0 0; line-height: 27px; }
.fold { display: flex; align-items: end; padding: 0 0 5px 50px; }

.warn { margin: 0 10px; background: #6b5600; color: #fff; border-radius: 0 0 8px 8px; display: grid; align-items: center; padding-left: 14px; box-shadow: 0 2px 4px #0006; grid-template-columns: 31px 159px 988px 159px 522px 1fr; z-index: 1; letter-spacing: -0.36px; }
.warn b { font-weight: 600; letter-spacing: -0.32px; }
.warn button { height: 32px; background: #bcbcbc; border: 1.5px solid #9b9b9b; color: #262626; border-radius: 4px; justify-self: start; width: 148px; letter-spacing: -0.4px; padding-right: 2px; }
.warn button + button { width: 99px; }

.doc { display: flex; padding-left: 454px; }
.page { width: 990px; height: 733px; background: #fff; margin-right: 455px; overflow: hidden; box-shadow: 0 0 0 1px #8a8886; }
.scroll { width: 21px; background: #3c3c3c; border-radius: 10px; display: grid; justify-items: center; grid-template-rows: 332px 1fr auto; padding: 6px 0; }
.scroll i { width: 11px; height: 21px; margin-top: -7px; border-radius: 5px; background: #c8c8c8; }
.ln { fill: none; stroke: #222; stroke-width: 1.15; }
.bt text, .st text { font-family: "Liberation Sans", Arial, sans-serif; letter-spacing: 0; fill: #000; }
.bt { font-weight: 700; font-size: 24.5px; }
.st { font-size: 15px; stroke: #000; stroke-width: .35; }

.status { background: #525252; border-top: 1px solid #3d3d3d; z-index: 1; color: #fff; font-size: 13px; letter-spacing: -0.3px; display: grid; align-items: center; padding-left: 15px; grid-template-columns: 105px 92px 39px 154px 23px 1051px 21px 64px 34px 66px 41px 16px 130px 27px 1fr; }
.status span:nth-of-type(3) { letter-spacing: -0.25px; }
.status b { letter-spacing: -0.28px; }
.view { width: 50px; height: 26px; background: #5f5f5f; display: grid; place-items: center; }
.slider { width: 125px; height: 14px; display: grid; place-items: center; background: linear-gradient(#bbb, #bbb) center / 100% 1.5px no-repeat; }
.slider i { width: 6px; height: 14px; background: #c4c4c4; }

.taskbar { background: linear-gradient(90deg, #e2d6d4 0, #e6d7d0 20%, #e9d8cd 45%, #e8d7ce 75%, #e9d9cf 100%); border-top: 1px solid #b9aca5; display: grid; align-items: center; padding-left: 25px; grid-template-columns: 477px 47px 280px 727px 1fr; }
.weather { display: flex; gap: 9px; align-items: center; line-height: 20px; }
.weather svg { margin-top: -3px; }
.weather span { margin-top: -4px; }
.weather i { font-style: normal; color: #555; }
.tsearch { width: 273px; height: 39px; background: #f8f3f0; border-radius: 20px; box-shadow: 0 0 0 1px #d9c6bc, 0 1px 1px #a99; display: flex; align-items: center; padding: 0 3px 0 14px; font-size: 17px; color: #5a5755; }
.tsearch span { margin: 0 auto 0 12px; }
.tsearch svg:last-child { margin-top: 6px; }
.apps { display: grid; grid-template-columns: repeat(11, 55px); height: 59px; align-items: center; }
.apps span { width: 48px; height: 48px; display: grid; place-items: center; position: relative; border-radius: 5px; }
.apps i { position: absolute; bottom: 0; left: 20px; width: 8px; height: 4px; border-radius: 2px; background: #857a76; }
.apps .cur { background: #f4ebe6; }
.apps .cur i { width: 20px; left: 14px; background: #24818f; }
.pre { font: 900 8px "Open Sans", sans-serif; letter-spacing: 0.3px; }
.bdg { font: bold 17px "Open Sans", sans-serif; fill: #fff; letter-spacing: 0; }
.bdg2 { font: 11px "Open Sans", sans-serif; fill: #fff; }
.tray { display: grid; align-items: center; line-height: 20px; grid-template-columns: 37px 41px 54px 30px 30px 28px 101px 1fr; }
.lang { width: 33px; text-align: center; margin-top: -3px; }
.clock { width: 90px; text-align: right; margin-top: -4px; letter-spacing: -0.1px; }
```
